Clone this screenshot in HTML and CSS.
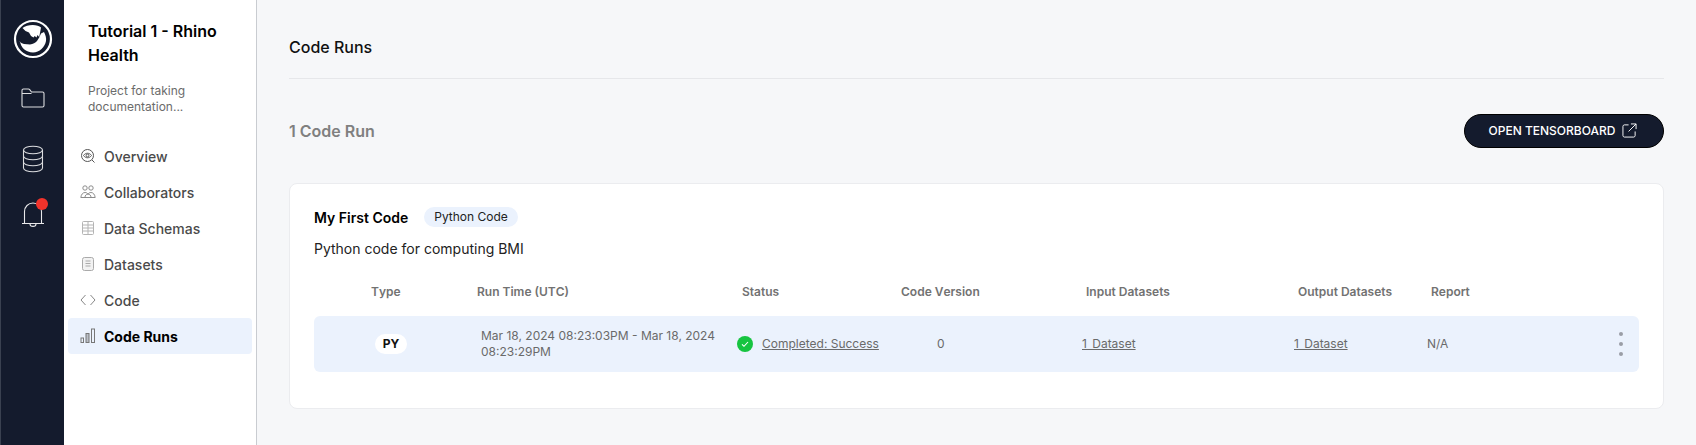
FILE: index.html
```html
<!DOCTYPE html>
<html lang="en">
<head>
<meta charset="utf-8">
<title>Code Runs</title>
<link rel="stylesheet" href="styles.css">
</head>
<body>
<div class="app">
  <nav class="rail">
    <svg class="logo" viewBox="0 0 40 40" width="40" height="40">
      <circle cx="20" cy="20" r="18" fill="none" stroke="#fff" stroke-width="2.200"/>
      <path fill="#fff" d="M9.500 9C14 5 25 5 28 8.500L27 14l-.8 4-1.700-2-1 2.500-1.800-1.500-1.200 1.500-2.500-1.500-2-3.500-3.500-1.500zM6.500 22c1 1.500 2.500 2.500 4.500 3l6 .5c3-.3 5.500-1.800 7-3.500l2.500-4 1.500-3.500 3-1.500c1.500 3 2.500 6 2 9-1 6-6.500 11.500-13 11.500-7 0-12.500-5-13-11.500z"/>
    </svg>
    <svg class="rail-icon folder" viewBox="0 0 24 24" width="24" height="24" fill="none" stroke="#fff" stroke-width="1.100" opacity=".85">
      <path d="M1 6.500V3.500C1 2.700 1.600 2 2.500 2h5c.5 0 .9.200 1.200.600L10.500 5H21.500c.8 0 1.500.7 1.500 1.500V18.500c0 .8-.7 1.500-1.500 1.500h-19C1.700 20 1 19.300 1 18.500V6.500h9.500"/>
    </svg>
    <svg class="rail-icon db" viewBox="0 0 24 28" width="24" height="28" fill="none" stroke="#fff" stroke-width="1.100" opacity=".85">
      <ellipse cx="12" cy="5" rx="9.500" ry="3.800"/>
      <path d="M2.500 5v18c0 2.100 4.300 3.800 9.500 3.800s9.500-1.700 9.500-3.800V5M2.500 11c0 2.100 4.300 3.800 9.500 3.800s9.500-1.700 9.500-3.800M2.500 17c0 2.100 4.300 3.800 9.500 3.800s9.500-1.700 9.500-3.800"/>
    </svg>
    <div class="bell">
      <svg viewBox="0 0 24 26" width="24" height="26" fill="none" stroke="#fff" stroke-width="1.100" opacity=".9">
        <path d="M3.500 21V9.500C3.500 4.800 7.300 1 12 1s8.500 3.800 8.500 8.500V21M1 21.500h22M9 22c0 3.200 6 3.200 6 0"/>
      </svg>
      <span class="badge"></span>
    </div>
  </nav>

  <aside class="panel">
    <h1 class="project">Tutorial 1 - Rhino Health</h1>
    <p class="project-desc">Project for taking documentation...</p>
    <ul class="menu">
      <li class="menu-item">
        <svg viewBox="0 0 16 16" width="16" height="16" fill="none" stroke="#555" stroke-width="1"><circle cx="7.500" cy="7.500" r="6"/><path d="M3.500 7.500c2-3 6-3 8 0-2 3-6 3-8 0z"/><circle cx="7.500" cy="7.500" r="1.400"/><path d="M12 12l2.500 2.500"/></svg>
        Overview
      </li>
      <li class="menu-item">
        <svg viewBox="0 0 16 16" width="16" height="16" fill="none" stroke="#808080" stroke-width=".9"><circle cx="5" cy="4" r="2.200"/><circle cx="11" cy="4" r="2.200"/><path d="M.8 13.500c.4-3 2-5 4.200-5 1.300 0 2.300.6 3 1.600.7-1 1.700-1.600 3-1.600 2.200 0 3.800 2 4.200 5zM5 13.500c0-2 1.200-3.400 3-3.400s3 1.400 3 3.400"/></svg>
        Collaborators
      </li>
      <li class="menu-item">
        <svg viewBox="0 0 16 16" width="16" height="16" fill="none" stroke="#b4b4b4" stroke-width="1"><rect x="2.500" y="1.500" width="11" height="13" rx="1"/><path d="M2.500 5h11M2.500 8h11M2.500 11h11M8 1.500v13"/></svg>
        Data Schemas
      </li>
      <li class="menu-item">
        <svg viewBox="0 0 16 16" width="16" height="16" fill="none" stroke="#aaa" stroke-width="1"><rect x="2.500" y="1.500" width="11" height="13" rx="2" fill="#f2f2f2"/><path d="M5.500 5h5M5.500 7.500h5M5.500 10h5"/></svg>
        Datasets
      </li>
      <li class="menu-item">
        <svg viewBox="0 0 16 16" width="16" height="16" fill="none" stroke="#888" stroke-width="1"><path d="M5.500 3L1 8l4.500 5M10.500 3L15 8l-4.500 5"/></svg>
        Code
      </li>
      <li class="menu-item active">
        <svg viewBox="0 0 16 16" width="16" height="16" fill="none" stroke="#777" stroke-width="1"><rect x="1" y="10" width="2.500" height="4.500"/><rect x="6" y="5.500" width="3" height="9" fill="#b9bec6"/><rect x="11.500" y="1" width="3" height="13.500"/></svg>
        Code Runs
      </li>
    </ul>
  </aside>

  <main class="main">
    <h2 class="page-title">Code Runs</h2>
    <div class="toolbar">
      <span class="count">1 Code Run</span>
      <button class="primary" type="button">OPEN TENSORBOARD
        <svg viewBox="0 0 16 16" width="15" height="15" fill="none" stroke="#fff" stroke-width="1"><path d="M7 2H2.500C1.700 2 1 2.700 1 3.500v10c0 .8.700 1.500 1.500 1.500h10c.8 0 1.500-.7 1.500-1.500V9M9.500 1H15v5.500M15 1L7 9"/></svg>
      </button>
    </div>
    <section class="card">
      <div class="card-head">
        <span class="card-title">My First Code</span>
        <span class="chip">Python Code</span>
      </div>
      <p class="card-desc">Python code for computing BMI</p>
      <div class="grid head">
        <span>Type</span><span>Run Time (UTC)</span><span>Status</span><span>Code Version</span><span>Input Datasets</span><span>Output Datasets</span><span>Report</span>
      </div>
      <div class="grid row">
        <span class="cell-type"><span class="pill">PY</span></span>
        <span class="cell-time">Mar 18, 2024 08:23:03PM - Mar 18, 2024 08:23:29PM</span>
        <span class="cell-status">
          <svg viewBox="0 0 16 16" width="16" height="16"><circle cx="8" cy="8" r="8" fill="#16c440"/><path d="M5 8.300l2 2 4-4.300" fill="none" stroke="#fff" stroke-width="1.100"/></svg>
          <a href="#">Completed: Success</a>
        </span>
        <span class="cell-version">0</span>
        <a class="cell-link" href="#">1 Dataset</a>
        <a class="cell-link" href="#">1 Dataset</a>
        <span class="cell-report">N/A<span class="dots"><i></i><i></i><i></i></span></span>
      </div>
    </section>
  </main>
</div>
</body>
</html>
```
FILE: styles.css
```css
* { box-sizing: border-box; }
html, body { margin: 0; height: 100%; overflow: hidden; }
body { font-family: Inter, "Liberation Sans", sans-serif; background: #f6f7f9; color: #111; }
.app { display: flex; height: 445px; }

.rail { width: 64px; flex: none; background: #141b2d; border-left: 1px solid #3a4150; display: flex; flex-direction: column; align-items: center; }
.logo { margin-top: 19px; }
.rail-icon.folder { margin-top: 28px; }
.rail-icon.db { margin-top: 34px; }
.bell { position: relative; margin-top: 29px; width: 24px; height: 26px; }
.badge { position: absolute; top: -4px; left: 15px; width: 12px; height: 12px; border-radius: 50%; background: #f2332b; }

.panel { width: 193px; flex: none; background: #fff; border-right: 1px solid #c9ccd1; padding: 19px 4px 0 4px; }
.project { margin: 0 0 0 20px; font-size: 16px; line-height: 24px; font-weight: 600; color: #000; }
.project-desc { margin: 16px 16px 0 20px; font-size: 12px; line-height: 16px; color: #6b6b6b; }
.menu { list-style: none; margin: 23px 0 0; padding: 0; }
.menu-item { display: flex; align-items: center; gap: 8px; height: 36px; padding-left: 12px; border-radius: 4px; font-size: 14px; font-weight: 500; color: #4a4a4a; }
.menu-item.active { background: #ebf2fd; color: #000; font-weight: 700; }

.main { flex: 1; min-width: 0; padding: 0 32px 0 32px; }
.page-title { margin: 0; height: 79px; padding-top: 36px; border-bottom: 1px solid #e6e7ea; font-size: 16px; line-height: 22px; font-weight: 500; color: #111; }
.toolbar { display: flex; align-items: center; justify-content: space-between; height: 34px; margin-top: 35px; }
.count { font-size: 16px; font-weight: 600; color: #808080; }
.primary { display: flex; align-items: center; justify-content: center; gap: 7px; width: 200px; height: 34px; padding: 0 2px 2px 0; border: 1px solid #000; border-radius: 17px; background: #141b2d; color: #fff; font: 500 12px Inter, sans-serif; }

.card { margin-top: 35px; height: 226px; padding: 23px 24px 0; background: #fff; border: 1px solid #ebecef; border-radius: 8px; }
.card-head { display: flex; align-items: center; gap: 16px; height: 20px; }
.card-title { font-size: 14px; font-weight: 600; color: #000; }
.chip { padding: 2px 10px; height: 20px; border-radius: 10px; background: #ebf2fd; font-size: 12px; line-height: 16px; color: #222; }
.card-desc { margin: 13px 0 0; font-size: 14px; line-height: 18px; color: #222; }

.grid { display: grid; grid-template-columns: 57px 106px 265px 159px 185px 212px 133px 1fr; align-items: center; }
.grid > :first-child { grid-column: 2; }
.head { margin-top: 24px; height: 18px; font-size: 12px; font-weight: 600; color: #727272; font-kerning: none; }
.row { margin-top: 16px; height: 56px; background: #ebf2fd; border-radius: 6px; font-size: 12px; line-height: 16px; color: #6a6a6a; }
.row a { color: #6a6a6a; text-decoration: underline; }
.cell-type { padding-left: 4px; }
.pill { display: inline-block; width: 32px; height: 20px; border-radius: 10px; background: #fff; text-align: center; font-weight: 700; line-height: 20px; color: #111; }
.cell-time { padding: 0 12px 0 4px; }
.cell-status { display: flex; align-items: center; gap: 8px; margin-left: -5px; padding-left: 1px; }
.cell-status svg { margin-left: -1px; }
.cell-status a { margin-left: 1px; }
.cell-version { padding-left: 36px; }
.cell-link { margin-left: -4px; justify-self: start; font-kerning: none; word-spacing: 2px; }
.cell-report { display: flex; align-items: center; justify-content: space-between; margin-left: -4px; padding-right: 16px; }
.dots { display: flex; flex-direction: column; gap: 6px; }
.dots i { display: block; width: 4px; height: 4px; border-radius: 50%; background: #9a9ea6; }
```
